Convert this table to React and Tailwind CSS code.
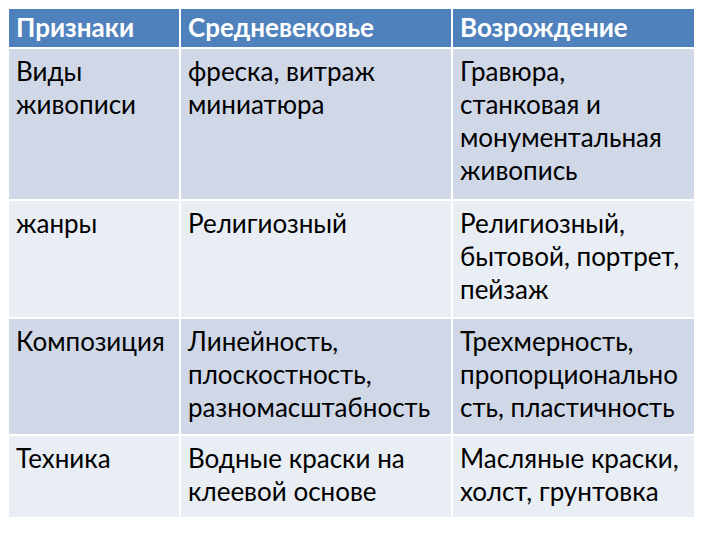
const header = ['Признаки', 'Средневековье', 'Возрождение']

const rows = [
  {
    h: 'h-[152px]',
    bg: 'bg-[#d0d8e8]',
    cells: [['Виды', 'живописи'], ['фреска, витраж', 'миниатюра'], ['Гравюра,', 'станковая и', 'монументальная', 'живопись']],
  },
  {
    h: 'h-[118px]',
    bg: 'bg-[#e9edf4]',
    cells: [['жанры'], ['Религиозный'], ['Религиозный,', 'бытовой, портрет,', 'пейзаж']],
  },
  {
    h: 'h-[117px]',
    bg: 'bg-[#d0d8e8]',
    cells: [['Композиция'], ['Линейность,', 'плоскостность,', 'разномасштабность'], ['Трехмерность,', 'пропорционально', 'сть, пластичность']],
  },
  {
    h: 'h-[81px]',
    bg: 'bg-[#e9edf4]',
    cells: [['Техника'], ['Водные краски на', 'клеевой основе'], ['Масляные краски,', 'холст, грунтовка']],
  },
]

const cols = ['w-[172px]', 'w-[272px]', 'w-[241px]']

export default function App() {
  return (
    <div className="w-[720px] h-[540px] bg-white pt-[9px] pl-[9px] font-['Lato',sans-serif] text-[26px] leading-[33px] text-black">
      <div className="flex flex-col w-[685px]">
        <div className="flex h-[40px] bg-[#4f81bd] border-b-2 border-white">
          {header.map((t, i) => (
            <div
              key={t}
              className={`${cols[i]} px-[7px] pt-[2px] font-bold text-white ${i < 2 ? 'border-r-2 border-white' : ''}`}
            >
              {t}
            </div>
          ))}
        </div>
        {rows.map((r, ri) => (
          <div key={ri} className={`flex ${r.h} ${r.bg} ${ri < rows.length - 1 ? 'border-b-2 border-white' : ''}`}>
            {r.cells.map((lines, i) => (
              <div key={i} className={`${cols[i]} px-[7px] pt-[6px] ${i < 2 ? 'border-r-2 border-white' : ''}`}>
                {lines.map((l) => (
                  <div key={l} className="whitespace-nowrap">{l}</div>
                ))}
              </div>
            ))}
          </div>
        ))}
      </div>
    </div>
  )
}
